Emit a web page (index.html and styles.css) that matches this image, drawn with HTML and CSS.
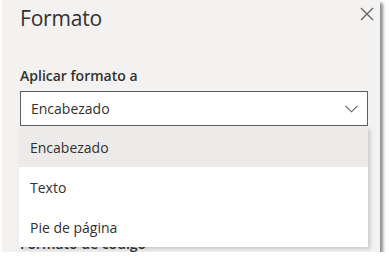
FILE: index.html
```html
<!DOCTYPE html>
<html lang="es">
<head>
<meta charset="utf-8">
<link rel="stylesheet" href="styles.css">
</head>
<body>
<div class="panel">
  <div class="header">
    <h1 class="title">Formato</h1>
    <button class="close" aria-label="Cerrar">
      <svg width="14" height="14" viewBox="0 0 14 14"><path d="M1 1 L13 13 M13 1 L1 13" stroke="#605e5c" stroke-width="1.2" fill="none"/></svg>
    </button>
  </div>
  <div class="field">
    <div class="label">Aplicar formato a</div>
    <div class="select">
      <span>Encabezado</span>
      <svg class="chev" width="13" height="8" viewBox="0 0 13 8"><path d="M0.5 0.8 L6.5 6.8 L12.5 0.8" stroke="#605e5c" stroke-width="1.1" fill="none"/></svg>
    </div>
  </div>
  <div class="label next">Formato de código</div>
  <ul class="menu">
    <li class="item selected">Encabezado</li>
    <li class="item">Texto</li>
    <li class="item">Pie de página</li>
  </ul>
</div>
</body>
</html>
```
FILE: styles.css
```css
html, body {
  margin: 0;
  padding: 0;
  background: #ffffff;
  font-family: "Open Sans", "Noto Sans", sans-serif;
  color: #323130;
}
.panel {
  position: relative;
  margin-left: 2px;
  width: 378px;
  height: 252px;
  background: #f3f2f1;
  box-shadow: 3px 3px 3px rgba(0,0,0,0.45);
  overflow: hidden;
  box-sizing: border-box;
  padding: 0 0 0 18px;
}
.header {
  display: flex;
  justify-content: space-between;
  align-items: flex-start;
  height: 40px;
}
.title {
  margin: 3px 0 0 0;
  font-size: 21px;
  font-weight: 400;
  line-height: 30px;
  letter-spacing: -0.2px;
}
.close {
  border: 0;
  background: none;
  padding: 0;
  margin: 7px 6px 0 0;
  width: 14px;
  height: 14px;
  display: flex;
}
.field {
  margin-top: 26px;
}
.label {
  font-size: 14px;
  font-weight: 600;
  line-height: 20px;
}
.select {
  margin-top: 5px;
  width: 348px;
  height: 35px;
  box-sizing: border-box;
  border: 1px solid #605e5c;
  background: #ffffff;
  display: flex;
  align-items: center;
  justify-content: space-between;
  padding: 0 8px 0 10px;
  font-size: 14px;
}
.chev {
  margin-right: 1px;
}
.next {
  margin-top: 108px;
}
.menu {
  position: absolute;
  left: 17px;
  top: 127px;
  width: 349px;
  margin: 0;
  padding: 0;
  list-style: none;
  background: #ffffff;
  box-shadow: 2px 2px 4px rgba(0,0,0,0.18);
}
.item {
  height: 40px;
  display: flex;
  align-items: center;
  padding-left: 11px;
  font-size: 14px;
}
.item.selected {
  background: #edebe9;
}
```
